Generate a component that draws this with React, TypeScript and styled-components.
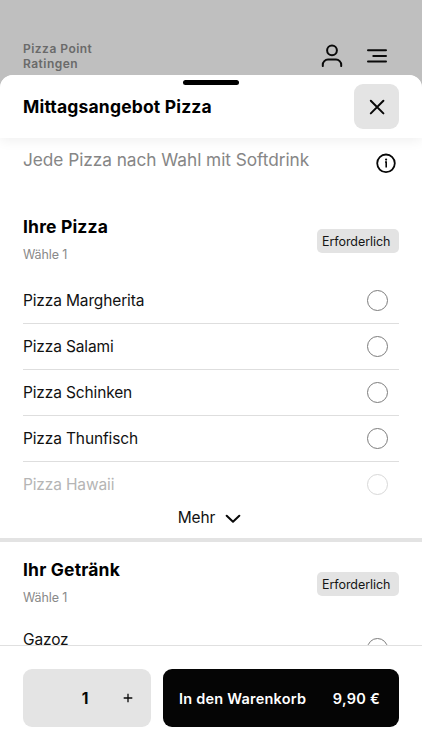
import React from "react";
import styled, { createGlobalStyle } from "styled-components";

const GlobalStyle = createGlobalStyle`
  * { box-sizing: border-box; }
  body { margin: 0; background: #bfbfbf; }
  button { border: 0; padding: 0; font: inherit; color: inherit; background: none; }
`;

const Screen = styled.div`
  width: 422px;
  height: 750px;
  display: flex;
  flex-direction: column;
  overflow: hidden;
  background: #bfbfbf;
  color: #111;
  font-family: Inter, "Liberation Sans", sans-serif;
`;

const TopBar = styled.header`
  height: 75px;
  flex: none;
  display: flex;
  justify-content: space-between;
  padding: 41px 35px 0 23px;
`;

const Brand = styled.div`
  width: 100px;
  font-size: 12px;
  line-height: 15px;
  font-weight: 600;
  letter-spacing: 0.48px;
  color: #6a6a6a;
`;

const TopIcons = styled.div`
  display: flex;
  gap: 24px;
  color: #0a0a0a;
  svg { display: block; }
`;

const Sheet = styled.main`
  flex: 1;
  min-height: 0;
  display: flex;
  flex-direction: column;
  background: #fff;
  border-radius: 13px 13px 0 0;
  overflow: hidden;
`;

const SheetHeader = styled.div`
  position: relative;
  z-index: 1;
  height: 63px;
  flex: none;
  display: flex;
  align-items: center;
  justify-content: space-between;
  padding: 0 23px;
  background: #fff;
  box-shadow: 0 2px 12px rgba(0, 0, 0, 0.07);
`;

const Handle = styled.div`
  position: absolute;
  top: 5px;
  left: 183px;
  width: 56px;
  height: 5px;
  border-radius: 3px;
  background: #000;
`;

const Title = styled.h1`
  margin: 0;
  font-size: 17.5px;
  line-height: 22px;
  font-weight: 650;
  letter-spacing: 0.17px;
  color: #000;
`;

const CloseButton = styled.button`
  width: 45px;
  height: 45px;
  border-radius: 9px;
  background: #e4e4e4;
  display: grid;
  place-items: center;
`;

const Content = styled.div`
  flex: 1;
  min-height: 0;
  overflow: hidden;
`;

const Intro = styled.div`
  height: 66px;
  padding: 11px 25px 0 23px;
  display: flex;
  justify-content: space-between;
  svg { display: block; margin-top: 3px; }
`;

const Description = styled.p`
  margin: 0;
  font-size: 17.3px;
  line-height: 22px;
  letter-spacing: -0.06px;
  color: #868686;
`;

const Group = styled.section<{ $divided?: boolean }>`
  padding: ${(p) => (p.$divided ? "16px" : "11px")} 23px 0;
  border-top: ${(p) => (p.$divided ? "4px solid #e3e3e3" : "0")};
`;

const GroupHead = styled.div`
  display: flex;
  justify-content: space-between;
  height: 63px;
`;

const GroupTitle = styled.h2`
  margin: 0 0 8px;
  font-size: 17.5px;
  line-height: 24px;
  font-weight: 650;
  letter-spacing: 0.17px;
  color: #000;
`;

const Hint = styled.div`
  font-size: 12.5px;
  line-height: 16px;
  letter-spacing: -0.1px;
  color: #898989;
`;

const Badge = styled.span`
  width: 82px;
  height: 24px;
  margin-top: 14px;
  padding-left: 5px;
  border-radius: 5px;
  background: #e3e3e3;
  font-size: 12.5px;
  line-height: 25px;
  letter-spacing: -0.06px;
  color: #151515;
`;

const Option = styled.label<{ $faded?: boolean; $last?: boolean }>`
  display: flex;
  align-items: center;
  justify-content: space-between;
  height: ${(p) => (p.$last ? "45px" : "46px")};
  padding-right: 11px;
  border-bottom: ${(p) => (p.$last ? "0" : "1px solid #dedede")};
  font-size: 15.5px;
  letter-spacing: -0.14px;
  color: ${(p) => (p.$faded ? "#b5b5b5" : "#111")};
`;

const PricedOption = styled(Option)`
  height: 54px;
  border-bottom: 0;
`;

const OptionName = styled.span`
  align-self: flex-start;
  margin-top: 9px;
  line-height: 20px;
`;

const Radio = styled.span<{ $faded?: boolean }>`
  width: 21px;
  height: 21px;
  border-radius: 50%;
  border: 1px solid ${(p) => (p.$faded ? "#d8d8d8" : "#7c7c7c")};
`;

const MoreButton = styled.button`
  width: 100%;
  height: 31px;
  padding: 0 3px 10px 0;
  display: flex;
  align-items: center;
  justify-content: center;
  gap: 10px;
  font-size: 15.5px;
  letter-spacing: -0.14px;
`;

const Footer = styled.footer`
  height: 105px;
  flex: none;
  position: relative;
  background: #fff;
  border-top: 1px solid #e0e0e0;
  padding: 23px 23px 0;
  display: flex;
  gap: 12px;
`;

const Stepper = styled.div`
  width: 128px;
  height: 58px;
  border-radius: 9px;
  background: #e4e4e4;
  display: grid;
  grid-template-columns: 40px 44px 42px;
  align-items: center;
  justify-items: center;
`;

const Quantity = styled.span`
  grid-column: 2;
  font-size: 15.5px;
  font-weight: 700;
  color: #050505;
`;

const CartButton = styled.button`
  width: 236px;
  height: 58px;
  border-radius: 9px;
  background: #050505;
  color: #fff;
  display: flex;
  align-items: center;
  justify-content: space-between;
  padding: 0 19px 0 16px;
  font-size: 14.5px;
  font-weight: 600;
`;

const CartLabel = styled.span`
  letter-spacing: 0.22px;
`;

const Price = styled.span`
  letter-spacing: 0.25px;
`;

const UserIcon = () => (
  <svg width="22" height="26" viewBox="0 0 22 26" fill="none" stroke="currentColor" strokeWidth="2" strokeLinecap="round">
    <circle cx="11" cy="9.3" r="4.9" />
    <path d="M1.8 25.1v-1.3a5.2 5.2 0 0 1 5.2-5.2h8a5.2 5.2 0 0 1 5.2 5.2v1.3" />
  </svg>
);

const MenuIcon = () => (
  <svg width="20" height="26" viewBox="0 0 20 26" fill="none" stroke="currentColor" strokeWidth="2" strokeLinecap="round">
    <path d="M1 9.3h18M6.3 14.9H19M1 20.6h18" />
  </svg>
);

const CloseIcon = () => (
  <svg width="16" height="16" viewBox="0 0 16 16" fill="none" stroke="#080808" strokeWidth="2" strokeLinecap="round">
    <path d="m1.8 1.8 12.6 12.6M14.4 1.8 1.8 14.4" />
  </svg>
);

const InfoIcon = () => (
  <svg width="22" height="22" viewBox="0 0 22 22" fill="none" stroke="#080808">
    <circle cx="11" cy="11.3" r="8.8" strokeWidth="1.8" />
    <path d="M10 10h1.2v5.4" strokeWidth="1.6" />
    <circle cx="11.1" cy="7.6" r="1.1" fill="#080808" stroke="none" />
  </svg>
);

const ChevronIcon = () => (
  <svg width="16" height="10" viewBox="0 0 16 10" fill="none" stroke="#080808" strokeWidth="2" strokeLinecap="round" strokeLinejoin="round">
    <path d="m1.7 2.7 6.3 6 6.3-6" />
  </svg>
);

const PlusIcon = () => (
  <svg width="10" height="10" viewBox="0 0 10 10" fill="none" stroke="#080808" strokeWidth="1.3">
    <path d="M5 .7v8.6M.7 5h8.6" />
  </svg>
);

const pizzas = ["Pizza Margherita", "Pizza Salami", "Pizza Schinken", "Pizza Thunfisch", "Pizza Hawaii"];

const GroupHeader = ({ title }: { title: string }) => (
  <GroupHead>
    <div>
      <GroupTitle>{title}</GroupTitle>
      <Hint>Wähle 1</Hint>
    </div>
    <Badge>Erforderlich</Badge>
  </GroupHead>
);

export default function App() {
  return (
    <>
      <GlobalStyle />
      <Screen>
        <TopBar>
          <Brand>Pizza Point Ratingen</Brand>
          <TopIcons>
            <UserIcon />
            <MenuIcon />
          </TopIcons>
        </TopBar>
        <Sheet>
          <SheetHeader>
            <Handle />
            <Title>Mittagsangebot Pizza</Title>
            <CloseButton aria-label="Schließen">
              <CloseIcon />
            </CloseButton>
          </SheetHeader>
          <Content>
            <Intro>
              <Description>Jede Pizza nach Wahl mit Softdrink</Description>
              <InfoIcon />
            </Intro>
            <Group>
              <GroupHeader title="Ihre Pizza" />
              {pizzas.map((name, i) => {
                const last = i === pizzas.length - 1;
                return (
                  <Option key={name} $faded={last} $last={last}>
                    {name}
                    <Radio $faded={last} />
                  </Option>
                );
              })}
              <MoreButton>
                Mehr
                <ChevronIcon />
              </MoreButton>
            </Group>
            <Group $divided>
              <GroupHeader title="Ihr Getränk" />
              <PricedOption>
                <OptionName>Gazoz</OptionName>
                <Radio />
              </PricedOption>
            </Group>
          </Content>
          <Footer>
            <Stepper>
              <Quantity>1</Quantity>
              <PlusIcon />
            </Stepper>
            <CartButton>
              <CartLabel>In den Warenkorb</CartLabel>
              <Price>9,90 €</Price>
            </CartButton>
          </Footer>
        </Sheet>
      </Screen>
    </>
  );
}
